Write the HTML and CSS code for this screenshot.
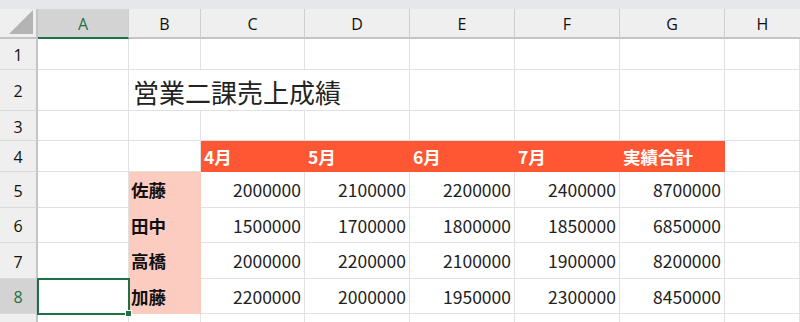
FILE: index.html
```html
<!DOCTYPE html>
<html lang="ja">
<head>
<meta charset="utf-8">
<link rel="stylesheet" href="styles.css">
</head>
<body>
<div class="topbar"></div>
<div class="sheet">
  <div class="c hd corner"><span class="tri"></span></div>
  <div class="c hd col sel-col">A</div>
  <div class="c hd col">B</div>
  <div class="c hd col">C</div>
  <div class="c hd col">D</div>
  <div class="c hd col">E</div>
  <div class="c hd col">F</div>
  <div class="c hd col">G</div>
  <div class="c hd col last">H</div>

  <div class="c hd row">1</div>
  <div class="c"></div><div class="c"></div><div class="c"></div><div class="c"></div><div class="c"></div><div class="c"></div><div class="c"></div><div class="c"></div>

  <div class="c hd row">2</div>
  <div class="c"></div>
  <div class="c title">営業二課売上成績</div>
  <div class="c"></div><div class="c"></div><div class="c"></div><div class="c"></div>

  <div class="c hd row">3</div>
  <div class="c"></div><div class="c"></div><div class="c"></div><div class="c"></div><div class="c"></div><div class="c"></div><div class="c"></div><div class="c"></div>

  <div class="c hd row">4</div>
  <div class="c"></div><div class="c"></div>
  <div class="c mh">4月</div>
  <div class="c mh">5月</div>
  <div class="c mh">6月</div>
  <div class="c mh">7月</div>
  <div class="c mh">実績合計</div>
  <div class="c"></div>

  <div class="c hd row">5</div>
  <div class="c"></div>
  <div class="c nm">佐藤</div>
  <div class="c num">2000000</div>
  <div class="c num">2100000</div>
  <div class="c num">2200000</div>
  <div class="c num">2400000</div>
  <div class="c num">8700000</div>
  <div class="c"></div>

  <div class="c hd row">6</div>
  <div class="c"></div>
  <div class="c nm">田中</div>
  <div class="c num">1500000</div>
  <div class="c num">1700000</div>
  <div class="c num">1800000</div>
  <div class="c num">1850000</div>
  <div class="c num">6850000</div>
  <div class="c"></div>

  <div class="c hd row">7</div>
  <div class="c"></div>
  <div class="c nm">高橋</div>
  <div class="c num">2000000</div>
  <div class="c num">2200000</div>
  <div class="c num">2100000</div>
  <div class="c num">1900000</div>
  <div class="c num">8200000</div>
  <div class="c"></div>

  <div class="c hd row sel-row">8</div>
  <div class="c active"><span class="handle"></span></div>
  <div class="c nm">加藤</div>
  <div class="c num">2200000</div>
  <div class="c num">2000000</div>
  <div class="c num">1950000</div>
  <div class="c num">2300000</div>
  <div class="c num">8450000</div>
  <div class="c"></div>

  <div class="c hd row"></div>
  <div class="c"></div><div class="c"></div><div class="c"></div><div class="c"></div><div class="c"></div><div class="c"></div><div class="c"></div><div class="c"></div>
</div>
</body>
</html>
```
FILE: styles.css
```css
html, body {
  margin: 0;
  padding: 0;
  background: #ffffff;
  overflow: hidden;
}
body {
  font-family: "Noto Sans CJK JP", "Noto Sans", sans-serif;
  color: #1f1f1f;
}
.topbar {
  height: 9px;
  background: #e6e7ea;
}
.sheet {
  display: grid;
  grid-template-columns: 38px 91px 72px 104px 105px 105px 105px 105px 1fr;
  grid-template-rows: 30px 31px 41px 30px 31px 36px 35px 36px 35px 20px;
}
.c {
  box-sizing: border-box;
  border-right: 1px solid #e1e1e1;
  border-bottom: 1px solid #e1e1e1;
  display: flex;
  align-items: center;
  white-space: nowrap;
  position: relative;
  min-width: 0;
}
.hd {
  background: #efefef;
  justify-content: center;
  font-family: "Open Sans", "Noto Sans", sans-serif;
  font-size: 16px;
  color: #111;
}
.col {
  border-right: 1px solid #cfcfcf;
  border-bottom: 2px solid #c4c4c4;
  padding-top: 1px;
}
.col.last {
  border-right: none;
}
.corner {
  border-right: 2px solid #c4c4c4;
  border-bottom: 2px solid #c4c4c4;
}
.tri {
  position: absolute;
  right: 3px;
  bottom: 3px;
  width: 0;
  height: 0;
  border-left: 24px solid transparent;
  border-bottom: 24px solid #b4b4b4;
}
.row {
  border-right: 2px solid #c4c4c4;
  border-bottom: 1px solid #d9d9d9;
  padding-top: 2px;
}
.sel-col {
  background: #d3d3d3;
  color: #1e7145;
  border-bottom: 2px solid #1e7145;
}
.sel-row {
  background: #d3d3d3;
  color: #1e7145;
}
.title {
  grid-column: span 3;
  font-size: 26px;
  padding-left: 4px;
  padding-top: 2px;
  color: #222;
}
.mh {
  background: #ff5733;
  border-color: #ff5733;
  color: #ffffff;
  font-weight: bold;
  font-size: 17.5px;
  padding-left: 3px;
  padding-top: 1px;
}
.nm {
  background: #fdccc0;
  border-color: #fdccc0;
  font-weight: bold;
  font-size: 17.5px;
  padding-left: 2px;
  color: #111;
}
.num {
  justify-content: flex-end;
  font-size: 17.5px;
  padding-right: 3px;
  color: #222;
}
.active {
  outline: 2px solid #1e7145;
  outline-offset: -1px;
  z-index: 2;
}
.handle {
  position: absolute;
  right: -4px;
  bottom: -4px;
  width: 5px;
  height: 5px;
  background: #1e7145;
  border: 1px solid #ffffff;
}
```
